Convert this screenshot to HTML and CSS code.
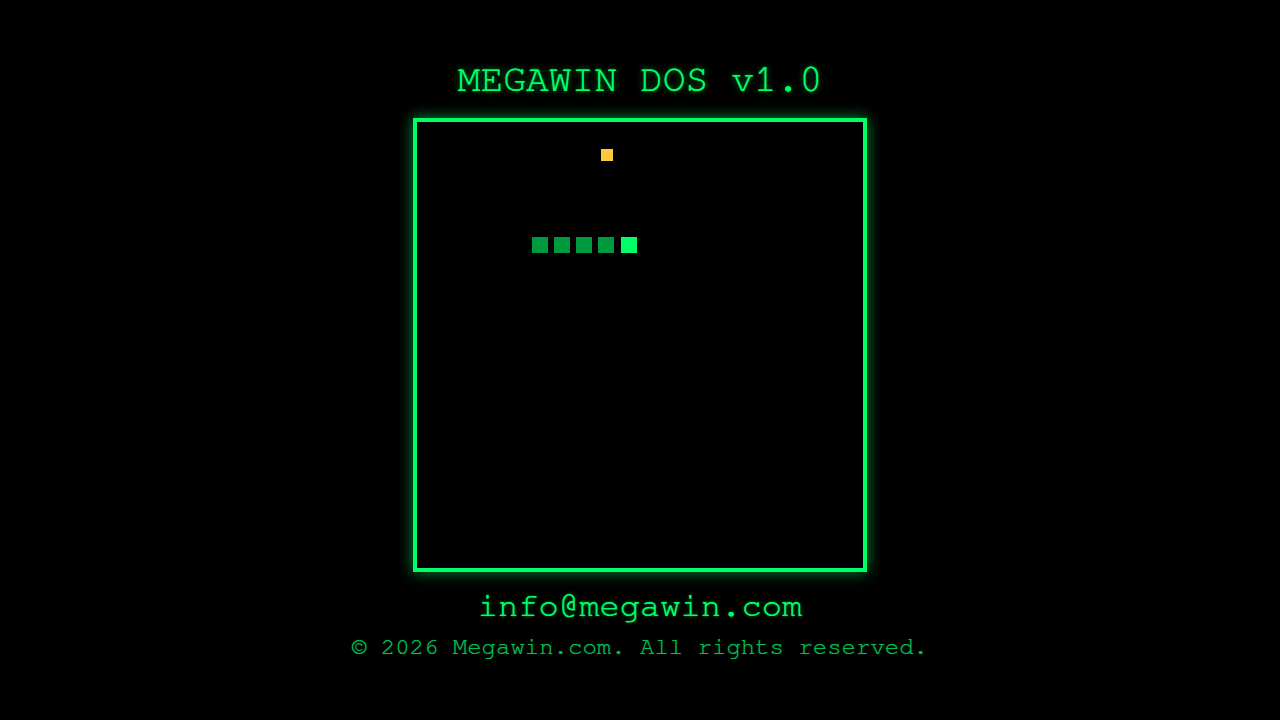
FILE: index.html
```html
<!DOCTYPE html>
<html>
<head>
<meta charset="utf-8">
<title>MEGAWIN DOS v1.0</title>
<link rel="stylesheet" href="styles.css">
</head>
<body>
<main class="screen">
  <h1 class="title">MEGAWIN DOS v1.0</h1>
  <div class="board">
    <div class="food" style="left:184px;top:27px"></div>
    <div class="seg" style="left:115px;top:115px"></div>
    <div class="seg" style="left:137px;top:115px"></div>
    <div class="seg" style="left:159px;top:115px"></div>
    <div class="seg" style="left:181px;top:115px"></div>
    <div class="seg head" style="left:204px;top:115px"></div>
  </div>
  <div class="email">info@megawin.com</div>
  <div class="copy">© 2026 Megawin.com. All rights reserved.</div>
</main>
</body>
</html>
```
FILE: styles.css
```css
html, body {
  margin: 0;
  padding: 0;
  background: #000;
  height: 100%;
}
.screen {
  height: 720px;
  display: flex;
  flex-direction: column;
  align-items: center;
  font-family: FreeMono, "Liberation Mono", "Courier New", monospace;
  color: #00ff66;
}
.title {
  margin: 60px 0 0;
  font-size: 38px;
  font-weight: normal;
  line-height: 40px;
  text-shadow: 0 0 1px #00ff66, 0 0 6px rgba(0, 255, 102, 0.6);
}
.board {
  position: relative;
  margin-top: 18px;
  width: 446px;
  height: 446px;
  border: 4px solid #00ff66;
  box-shadow: 0 0 14px rgba(0, 255, 102, 0.55);
  background: #000;
}
.seg {
  position: absolute;
  width: 16px;
  height: 16px;
  background: #009a3e;
}
.seg.head {
  background: #00ff66;
}
.food {
  position: absolute;
  width: 12px;
  height: 12px;
  background: #ffc83a;
}
.email {
  margin-top: 16px;
  font-size: 33.8px;
  line-height: 36px;
  text-shadow: 0 0 1px #00ff66, 0 0 4px rgba(0, 255, 102, 0.4);
}
.copy {
  margin-top: 9px;
  font-size: 24px;
  line-height: 28px;
  color: #00c04f;
  text-shadow: 0 0 1px rgba(0, 192, 79, 0.8);
}
```
